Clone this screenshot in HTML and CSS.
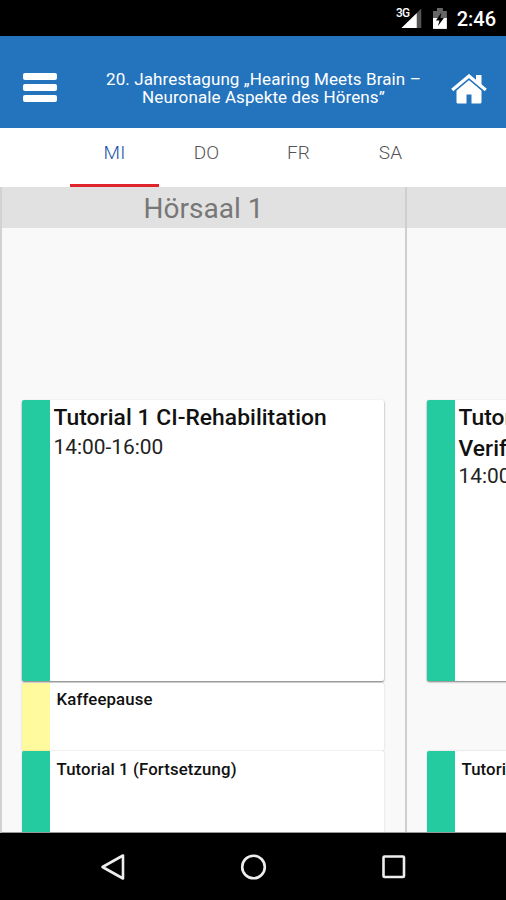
FILE: index.html
```html
<!DOCTYPE html>
<html lang="de">
<head>
  <meta charset="UTF-8" />
  <meta name="viewport" content="width=device-width, initial-scale=1" />
  <title>20. Jahrestagung</title>
  <link rel="stylesheet" href="styles.css">
</head>
<body>
  <div class="screen">

    <!-- Status bar -->
    <div class="status-bar">
      <svg class="signal" width="28" height="24" viewBox="0 0 28 24">
        <text class="network" x="0" y="12">3G</text>
        <path d="M21 8L25.500 3.500V23H21z" fill="#555"/>
        <path d="M5.500 23L21 8v15z" fill="#fff"/>
      </svg>
      <svg class="battery" width="14" height="21" viewBox="0 0 14 21">
        <path d="M0 3h4V0h6v3h4v8H0z" fill="#666"/>
        <path d="M0 10h14v11H0z" fill="#fff"/>
        <path d="M8.5 4.5L3 12.5h3.5L5 18l6-8H7.500z" fill="#000"/>
      </svg>
      <span class="clock">2:46</span>
    </div>

    <header class="app-bar">
      <div class="menu">
        <span></span>
        <span></span>
        <span></span>
      </div>
      <h1>20. Jahrestagung „Hearing Meets Brain –<br>Neuronale Aspekte des Hörens”</h1>
      <svg class="home" width="36" height="30" viewBox="0 0 36 30">
        <path d="M18 6L30.500 16.500V28q0 1.500-1.500 1.500H20.500V20.500h-5v9H7Q5.500 29.500 5.500 28V16.500z" fill="#fff"/>
        <path d="M25 1h5.500v12L25 8z" fill="#fff"/>
        <path d="M3 17.500L18 5l15 12.500" fill="none" stroke="#2474bd" stroke-width="1.200"/>
        <path d="M1.200 16L18 2l16.800 14" fill="none" stroke="#fff" stroke-width="3.200"/>
      </svg>
    </header>

    <!-- Days -->
    <nav class="tabs">
      <div class="tab active">MI</div>
      <div class="tab">DO</div>
      <div class="tab">FR</div>
      <div class="tab">SA</div>
    </nav>

    <!-- Rooms -->
    <main class="schedule">
      <section class="room">
        <h2>Hörsaal 1</h2>
        <div class="card long">
          <h3>Tutorial 1 CI-Rehabilitation</h3>
          <p>14:00-16:00</p>
        </div>
        <div class="card pause">
          <h4>Kaffeepause</h4>
        </div>
        <div class="card rest">
          <h4>Tutorial 1 (Fortsetzung)</h4>
        </div>
      </section>
      <section class="room">
        <h2></h2>
        <div class="card long">
          <h3 class="two-lines">Tutorial 2<br>Verifikation</h3>
          <p>14:00-16:00</p>
        </div>
        <div class="gap"></div>
        <div class="card rest">
          <h4>Tutorial 2 (Fortsetzung)</h4>
        </div>
      </section>
    </main>

    <!-- System buttons -->
    <div class="nav-bar">
      <svg width="28" height="30" viewBox="0 0 28 30">
        <path d="M3.500 15L24 3.500v23z"/>
      </svg>
      <svg width="28" height="30" viewBox="0 0 28 30">
        <circle cx="14.500" cy="15" r="11.300"/>
      </svg>
      <svg width="28" height="30" viewBox="0 0 28 30">
        <rect x="4.500" y="4.500" width="20.500" height="20.500" rx="1"/>
      </svg>
    </div>

  </div>
</body>
</html>
```

FILE: styles.css
```css
body {
  margin: 0;
  font-family: Roboto, sans-serif;
  background: #000;
}

h1, h2, h3, h4, p {
  margin: 0;
}

.screen {
  display: flex;
  flex-direction: column;
  width: 506px;
  height: 900px;
  overflow: hidden;
}

.status-bar {
  display: flex;
  height: 36px;
  box-sizing: border-box;
  padding: 5px 10px 0 396px;
  background: #000;
  color: #fff;
}

.network {
  font-size: 12px;
  font-weight: 500;
  letter-spacing: -0.8px;
  fill: #fff;
}

.battery {
  margin: 3px 0 0 9px;
}

.clock {
  margin-left: 10px;
  font-size: 20px;
  font-weight: 500;
  line-height: 28px;
  white-space: nowrap;
}

.app-bar {
  display: flex;
  align-items: center;
  height: 92px;
  box-sizing: border-box;
  padding: 0 19px 0 23px;
  background: #2474bd;
  color: #fff;
}

.menu {
  display: flex;
  flex-direction: column;
  gap: 4px;
  width: 34px;
  margin-top: 11px;
}

.menu span {
  height: 7px;
  border-radius: 2px;
  background: #fff;
}

.app-bar h1 {
  flex: 1;
  margin-top: 11px;
  padding-left: 19px;
  font-size: 17px;
  font-weight: 400;
  line-height: 18px;
  letter-spacing: 0.1px;
  text-align: center;
  white-space: nowrap;
}

.home {
  margin-top: 14px;
}

.tabs {
  display: flex;
  height: 59px;
  padding-left: 70px;
  background: #fff;
}

.tab {
  width: 89px;
  height: 56px;
  margin-right: 3px;
  font-size: 19px;
  font-weight: 300;
  line-height: 49px;
  letter-spacing: 0.2px;
  text-align: center;
  color: #555;
}

.tab.active {
  border-bottom: 3px solid #e0242c;
  color: #1450a8;
}

.schedule {
  display: flex;
  height: 645px;
  border-left: 2px solid #d2d2d2;
  border-bottom: 1px solid #999;
  overflow: hidden;
  background: #f9f9f9;
}

.room {
  flex: none;
  width: 403px;
  border-right: 2px solid #cfcfcf;
}

.room h2 {
  height: 41px;
  margin-bottom: 172px;
  background: #e1e1e1;
  color: #777;
  font-size: 28px;
  font-weight: 400;
  line-height: 44px;
  text-align: center;
}

.card {
  width: 330px;
  margin-left: 19.5px;
  border-left: 28px solid #25cba0;
  padding-left: 4px;
  border-radius: 2px;
  background: #fff;
  box-shadow: 0 1px 2px rgba(0,0,0,0.2);
}

.card.long {
  height: 281px;
  box-shadow: 0 1px 2px rgba(0,0,0,0.5);
}

.card.pause {
  height: 68px;
  margin-top: 2px;
  border-left-color: #fffa9e;
  box-shadow: 0 0 2px rgba(0,0,0,0.2);
}

.card.rest {
  height: 90px;
  box-shadow: 0 0 2px rgba(0,0,0,0.2);
}

.gap {
  height: 70px;
}

.card h3 {
  padding-top: 2px;
  margin-bottom: 1px;
  font-size: 22.8px;
  font-weight: 500;
  line-height: 31px;
  letter-spacing: 0.05px;
  color: #111;
}

.card h3.two-lines {
  margin-bottom: -1px;
}

.card p {
  font-size: 20.9px;
  font-weight: 400;
  line-height: 27px;
  color: #222;
}

.card h4 {
  padding: 7px 0 0 3px;
  font-size: 16.8px;
  font-weight: 500;
  line-height: 22px;
  letter-spacing: 0.12px;
  color: #111;
}

.card.pause h4 {
  padding-top: 5px;
}

.nav-bar {
  display: flex;
  gap: 112px;
  height: 67px;
  box-sizing: border-box;
  padding: 19px 0 0 99px;
  background: #000;
}

.nav-bar svg {
  fill: none;
  stroke: #eee;
  stroke-width: 2.6;
  stroke-linejoin: round;
}
```
